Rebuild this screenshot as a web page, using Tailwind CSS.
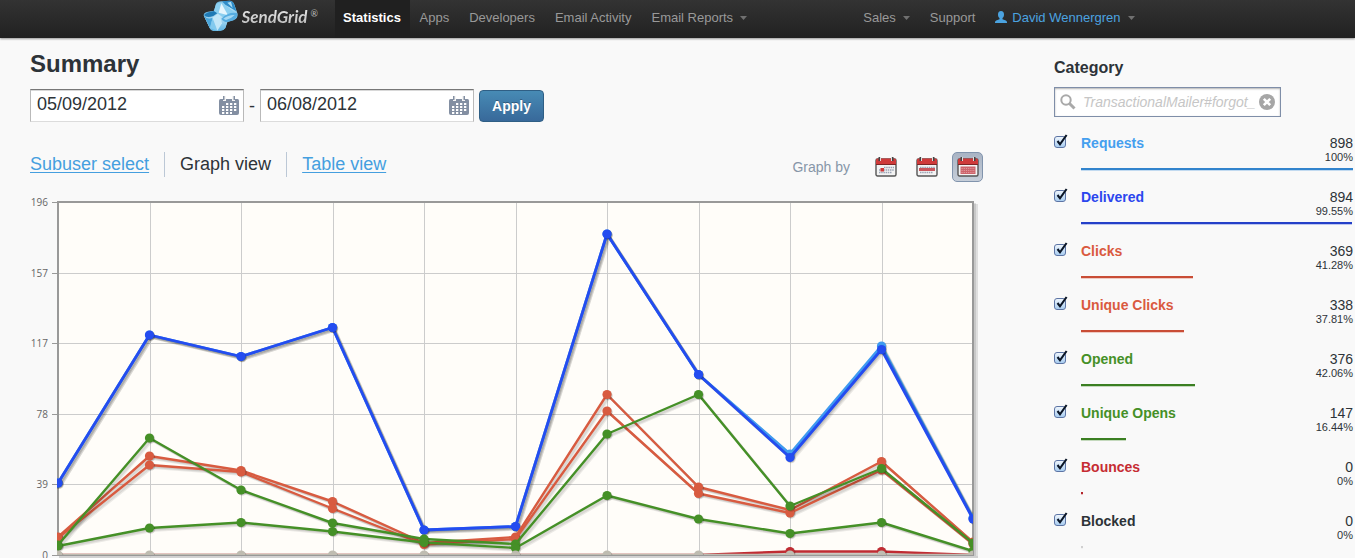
<!DOCTYPE html>
<html lang="en">
<head>
<meta charset="utf-8">
<meta name="viewport" content="width=device-width, initial-scale=1">
<title>SendGrid Statistics</title>
<script src="https://cdn.jsdelivr.net/npm/@tailwindcss/browser@4"></script>
</head>
<body class="h-screen overflow-hidden bg-[#f9f9f9] font-['Liberation_Sans',Arial,sans-serif] text-[#2d3338]">

<svg class="hidden" aria-hidden="true">
  <defs>
    <symbol id="tick" viewBox="0 0 14 15"><path d="M3.5 7 L6 10.3 L12.6 1" fill="none" stroke="#0a1526" stroke-width="2.1"/></symbol>
    <symbol id="date" viewBox="0 0 20 19">
      <path d="M1.500 3 H18.500 Q20 3 20 4.500 V17 Q20 19 18 19 H2 Q0 19 0 17 V4.500 Q0 3 1.500 3Z" fill="#838fa2"/>
      <path d="M4 0H7V5H4Z M13 0H16V5H13Z" fill="#f4f4f4"/>
      <path d="M4 0 H5.500 V4 H4Z M14.500 0 H16 V4 H14.500Z" fill="#838fa2"/>
      <path d="M7 8H18 M3 11H18 M3 14H18 M3 17H13" stroke="#fff" stroke-width="2" stroke-dasharray="2.300 1.700"/>
    </symbol>
    <symbol id="cal" viewBox="0 0 22 20">
      <rect x="1" y="2" width="20" height="17" rx="1.500" fill="#f3f3f3" stroke="#555" stroke-width="1.400"/>
      <path d="M1 3 Q1 1.500 2.500 1.500 H19.500 Q21 1.500 21 3 V7 H1Z" fill="#cf3a3a"/>
      <path d="M1 7.500H21" stroke="#7d2626"/>
      <path d="M4.500 0V4 M17.500 0V4" stroke="#444" stroke-width="2"/>
      <path d="M5.500 0V4 M16.500 0V4" stroke="#ddd" stroke-width="1"/>
    </symbol>
  </defs>
</svg>

<header class="bg-linear-to-b from-[#333] to-[#212121] shadow-[0_1px_2px_rgba(0,0,0,0.4)]">
  <div class="mx-auto flex h-[38px] max-w-[950px] text-[13px] leading-9 text-[#999]">
    <a href="#" aria-label="SendGrid" class="flex w-[132px] shrink-0 items-start gap-[3px]">
      <svg class="h-8 w-9 shrink-0" viewBox="37 0 108 96" aria-hidden="true">
        <defs>
          <linearGradient id="g1" x1="0" y1="0" x2="1" y2="1"><stop offset="0" stop-color="#2d8fc9"/><stop offset=".5" stop-color="#bfe6f8"/><stop offset="1" stop-color="#3a9cd6"/></linearGradient>
          <linearGradient id="g2" x1="0" y1="0" x2="0" y2="1"><stop offset="0" stop-color="#d4eefa"/><stop offset="1" stop-color="#5db4e3"/></linearGradient>
        </defs>
        <path d="M39 46 Q39 37 52 35 L70 32 L76 12 Q80 3 94 4 L118 2 Q128 3 131 14 L141 42 Q142 56 128 61 L110 66 L104 84 Q98 93 86 92 L70 93 Q60 92 57 84Z" fill="url(#g1)"/>
        <path d="M39 46 Q50 60 68 51 L86 40 L110 66 L104 84 Q98 93 86 92 L70 93 Q60 92 57 84Z" fill="url(#g2)"/>
        <path d="M39 46 Q50 60 66 53 L58 84Z" fill="#4aa5da"/>
        <path d="M58 84 L66 53 L80 92Z" fill="#83caee"/>
        <path d="M66 53 L86 40 L94 70 L80 92Z" fill="#c3e7f8"/>
        <path d="M40 45 Q48 36 70 33 L84 37 L68 48 Q48 56 40 45Z" fill="#1f7ab5"/>
        <path d="M76 12 Q90 2 104 14 L131 36 L110 62 L86 44 L70 33Z" fill="#8bcff0"/>
        <path d="M92 10 L112 46 L84 38Z" fill="#e6f6fd"/>
        <path d="M94 4 L118 2 Q128 3 131 14 L137 34 L104 14Z" fill="#2e8cc8"/>
        <path d="M110 8 L121 5 L126 24Z" fill="#a9dcf4"/>
        <path d="M92 56 Q114 34 139 39 Q142 52 128 61 L110 66 Q98 66 92 56Z" fill="#57ade0"/>
        <path d="M98 56 Q114 44 132 45 Q122 56 106 60Z" fill="#a6d9f3"/>
      </svg>
      <span class="-mr-1 bg-linear-to-b from-white to-[#a5a5a5] bg-clip-text pr-1 font-['Lato',sans-serif] text-[17px] leading-[34px] font-bold text-transparent italic">SendGrid</span>
      <span class="font-['Lato',sans-serif] text-[9px] leading-7 text-[#bbb]">®</span>
    </a>
    <nav class="flex grow">
      <a href="#" class="w-[75px] bg-[#202020] text-center font-bold text-white">Statistics</a>
      <a href="#" class="px-2.5">Apps</a>
      <a href="#" class="px-2.5">Developers</a>
      <a href="#" class="px-2.5">Email Activity</a>
      <a href="#" class="flex gap-[7px] px-2.5">Email Reports<svg class="mt-4 h-1 w-[7px]" viewBox="0 0 7 4" aria-hidden="true"><path d="M0 0H7L3.500 4Z" fill="#707070"/></svg></a>
      <a href="#" class="ml-auto flex gap-[7px] px-2.5">Sales<svg class="mt-4 h-1 w-[7px]" viewBox="0 0 7 4" aria-hidden="true"><path d="M0 0H7L3.500 4Z" fill="#707070"/></svg></a>
      <a href="#" class="px-2.5">Support</a>
      <a href="#" class="mr-2 flex px-2.5 text-[#4ba3e0]"><svg class="mt-[11px] mr-[5px] h-3 w-3" viewBox="0 0 12 12" aria-hidden="true"><path d="M6 0C8 0 9 1.400 9 3.400 9 5 8.400 6.300 7.500 7V8.200L10.800 9.400Q12 9.900 12 11.200V12H0V11.200Q0 9.900 1.200 9.400L4.500 8.200V7C3.600 6.300 3 5 3 3.400 3 1.400 4 0 6 0Z" fill="#4ba3e0"/></svg>David Wennergren<svg class="mt-4 ml-[7px] h-1 w-[7px]" viewBox="0 0 7 4" aria-hidden="true"><path d="M0 0H7L3.500 4Z" fill="#707070"/></svg></a>
    </nav>
  </div>
</header>

<main class="flex items-start gap-[71px] pr-0.5 pl-[30px]">
  <section class="min-w-0 flex-1 pt-2.5">
    <h1 class="text-2xl leading-8 font-bold">Summary</h1>

    <form class="mt-[9px] flex items-center text-lg" onsubmit="return false">
      <div class="relative">
        <input aria-label="From date" value="05/09/2012" class="h-[33px] w-[214px] border border-[#b9b9b9] border-t-[#777] border-b-[#dcdcdc] bg-white pb-0.5 pl-1.5 shadow-[inset_0_1px_0_#d8d8d8] outline-none">
        <svg class="pointer-events-none absolute top-[7px] right-[5px] h-[19px] w-5" aria-hidden="true"><use href="#date"/></svg>
      </div>
      <span class="w-4 text-center">-</span>
      <div class="relative">
        <input aria-label="To date" value="06/08/2012" class="h-[33px] w-[214px] border border-[#b9b9b9] border-t-[#777] border-b-[#dcdcdc] bg-white pb-0.5 pl-1.5 shadow-[inset_0_1px_0_#d8d8d8] outline-none">
        <svg class="pointer-events-none absolute top-[7px] right-[5px] h-[19px] w-5" aria-hidden="true"><use href="#date"/></svg>
      </div>
      <button class="ml-[5px] h-8 w-[65px] rounded-sm border border-[#2f5f85] bg-linear-to-b from-[#478bb5] to-[#38699a] text-sm font-bold text-white [text-shadow:0_-1px_0_rgba(0,0,0,0.3)]">Apply</button>
    </form>

    <div class="mt-[30px] flex items-start justify-between">
      <nav class="flex text-lg leading-[25px]">
        <a href="#" class="pr-[15px] text-[#459fdf] underline underline-offset-2">Subuser select</a>
        <span class="border-x border-[#bcc8d6] px-[15px]">Graph view</span>
        <a href="#" class="px-[15px] text-[#459fdf] underline underline-offset-2">Table view</a>
      </nav>
      <div class="flex h-[30px] items-center text-sm text-[#8796a8]">
        <span class="mr-5">Graph by</span>
        <button aria-label="Day" class="mr-2.5 flex h-[30px] w-[31px] items-center justify-center">
          <svg class="h-5 w-[22px]" viewBox="0 0 22 20" aria-hidden="true"><use href="#cal"/><path d="M9 10.500H19M4 13H19M4 15.500H17" stroke="#9aa3b5" stroke-width="1.500" stroke-dasharray="1.500 .7"/><rect x="5.500" y="11" width="3.500" height="3.500" fill="#cf3a3a"/></svg>
        </button>
        <button aria-label="Week" class="mr-2.5 flex h-[30px] w-[31px] items-center justify-center">
          <svg class="h-5 w-[22px]" viewBox="0 0 22 20" aria-hidden="true"><use href="#cal"/><path d="M4 10.500H19M4 15.500H17" stroke="#9aa3b5" stroke-width="1.500" stroke-dasharray="1.500 .7"/><rect x="3" y="11" width="16" height="3" fill="#c9565c"/></svg>
        </button>
        <button aria-label="Month" aria-pressed="true" class="flex h-[30px] w-[31px] items-center justify-center rounded-[5px] border border-[#8194ad] bg-linear-to-b from-[#a9b4c4] to-[#c6ced9]">
          <svg class="h-5 w-[22px]" viewBox="0 0 22 20" aria-hidden="true"><use href="#cal"/><rect x="3.500" y="9.500" width="15" height="7.500" fill="#cd646b"/><path d="M4.500 11.500H18M4.500 13.500H18M4.500 15.500H18" stroke="#e5a5a8" stroke-width=".8" stroke-dasharray="1.200 1"/></svg>
        </button>
      </div>
    </div>

    <svg id="chart" class="mt-[13px] block w-full font-['Open_Sans',sans-serif]" viewBox="30 195 953 365" role="img" aria-label="Email statistics chart">
      <path d="M974 204H978V560H974Z" fill="#000" opacity=".1"/>
      <path d="M974 203H976V560H974Z" fill="#000" opacity=".1"/>
      <rect x="58" y="202" width="915" height="353" fill="#fffdf9"/>
      <path d="M59 556H978V560H59Z" fill="#d2d2d2"/>
      <g id="grid" stroke="#ccc"></g>
      <path d="M58 556V202H973V556" fill="none" stroke="#999" stroke-width="2"/>
      <path d="M57 555H974" stroke="#999" stroke-width="2"/>
      <clipPath id="plot"><rect x="57" y="202" width="916" height="353"/></clipPath>
      <g id="series" clip-path="url(#plot)" fill="none" stroke-linejoin="round"></g>
      <g id="labels" font-size="10" fill="#666" text-anchor="end"></g>
    </svg>
  </section>

  <aside class="w-[299px] shrink-0 pt-[18px]">
    <label for="category" class="block text-base leading-6 font-bold">Category</label>
    <div class="mt-[7px] flex h-[30px] w-[227px] items-center border border-[#7f8ea8] bg-white px-[5px] shadow-[inset_0_1px_2px_rgba(0,0,0,0.3)]">
      <svg class="h-4 w-4 shrink-0" viewBox="0 0 16 16" aria-hidden="true"><circle cx="6" cy="6" r="4.700" fill="none" stroke="#a9a9a9" stroke-width="2"/><path d="M9.500 9.500L14.500 14.500" stroke="#a9a9a9" stroke-width="3"/></svg>
      <input id="category" value="TransactionalMailer#forgot_" class="ml-[7px] min-w-0 flex-1 bg-transparent text-sm text-[#c6c6c6] italic outline-none">
      <button aria-label="Clear category" class="h-4 w-4 shrink-0"><svg class="h-4 w-4" viewBox="0 0 16 16" aria-hidden="true"><circle cx="8" cy="8" r="8" fill="#a6a6a6"/><path d="M4.800 4.800L11.200 11.200M11.200 4.800L4.800 11.200" stroke="#fff" stroke-width="2.600"/></svg></button>
    </div>
    <ul id="metrics" class="mt-[17px]"></ul>
  </aside>
</main>

<template id="metric">
  <li class="mb-[17px] flex">
    <span class="relative w-[27px] shrink-0 pt-0.5">
      <input type="checkbox" checked class="block h-3 w-3 appearance-none rounded-[3px] border border-[#5d75a5] bg-linear-to-b from-[#eef5fc] to-[#a9cdf0]">
      <svg class="pointer-events-none absolute top-0 left-0 h-[15px] w-3.5" aria-hidden="true"><use href="#tick"/></svg>
    </span>
    <div class="flex-1">
      <div class="flex h-[29px] justify-between text-sm leading-[18px]">
        <label class="font-bold"></label>
        <div class="text-right"><div class="count"></div><div class="pct text-[11px] leading-[11px]"></div></div>
      </div>
      <div class="bar mt-[5px] h-[3px] min-w-0.5 border-b border-white/70"></div>
    </div>
  </li>
</template>

<script>
  const metrics = [
    ['Requests', 898, '100%', '#459fef', '#3284cd'],
    ['Delivered', 894, '99.55%', '#2b46ee', '#2440c8'],
    ['Clicks', 369, '41.28%', '#da5a3f', '#c94d36'],
    ['Unique Clicks', 338, '37.81%', '#da5a3f', '#c94d36'],
    ['Opened', 376, '42.06%', '#459027', '#3b7f22'],
    ['Unique Opens', 147, '16.44%', '#459027', '#3b7f22'],
    ['Bounces', 0, '0%', '#c62c33', '#b4262c'],
    ['Blocked', 0, '0%', '#2d3338', '#d0d0d0']
  ];
  const list = document.getElementById('metrics');
  metrics.forEach(([name, count, pct, color, bar], i) => {
    const row = document.getElementById('metric').content.cloneNode(true);
    const label = row.querySelector('label');
    label.textContent = name;
    label.htmlFor = row.querySelector('input').id = 'metric-' + i;
    label.style.color = color;
    row.querySelector('.count').textContent = count;
    row.querySelector('.pct').textContent = pct;
    const b = row.querySelector('.bar');
    b.style.width = pct;
    b.style.backgroundColor = bar;
    list.append(row);
  });

  const draw = (parent, tag, attrs, text) => {
    const el = document.createElementNS('http://www.w3.org/2000/svg', tag);
    for (const k in attrs) el.setAttribute(k, attrs[k]);
    if (text !== undefined) el.textContent = text;
    parent.append(el);
    return el;
  };
  const grid = document.getElementById('grid');
  const labels = document.getElementById('labels');
  [196, 157, 117, 78, 39, 0].forEach((v, i) => {
    const y = [202.5, 273.5, 343.5, 414.5, 484.5, 555.5][i];
    draw(grid, 'path', {d: `M52 ${y}H973`});
    draw(grid, 'path', {d: `M52 ${y}H57`, stroke: '#999'});
    draw(labels, 'text', {x: 48, y: Math.floor(y) + 4}, v);
  });
  const xs = [58, 149.5, 241, 332.5, 424, 515.5, 607, 698.5, 790, 881.5, 973];
  xs.slice(1, -1).forEach(x => draw(grid, 'path', {d: `M${Math.floor(x + .7) + .5} 203V560`}));

  // Vertical position of every point, one list per series, back to front.
  const base = 555;
  const series = [
    ['#3f9bf0', 2.8, [483, 335, 356.5, 327.5, 530, 526.5, 234, 374.5, 454, 346, 518]],
    ['#244cf0', 2.8, [483, 335, 356.5, 327.5, 530, 526.5, 234, 374.5, 457.5, 349.5, 519]],
    ['#d85b40', 2.4, [537, 456, 470.5, 501.5, 543, 537, 394.5, 487, 510, 461.5, 542]],
    ['#d85b40', 2.4, [538, 465, 472, 508.5, 544.5, 539, 411, 493.5, 513, 470, 544]],
    ['#459027', 2.4, [545, 438, 490, 523, 539, 544, 434, 394.5, 506, 468.5, 543]],
    ['#459027', 2.4, [546, 528, 522.5, 531.5, 542.5, 548, 495.5, 519, 533.5, 522.5, 551]],
    ['#c02c33', 2.4, [base, base, base, base, base, base, base, base, 551.5, 551.5, base]],
    ['#bfbcb1', 2.4, [base, base, base, base, base, base, base, base, base, base, base]]
  ];
  const plot = document.getElementById('series');
  series.forEach(([color, width, ys], n) => {
    const points = ys.map((y, i) => `${xs[i]},${y}`).join(' ');
    for (const o of [.9, 1.8, 2.7]) {
      draw(plot, 'polyline', {points, stroke: '#000', 'stroke-opacity': .08, 'stroke-width': width, transform: `translate(${o} ${o})`});
    }
    draw(plot, 'polyline', {points, stroke: color, 'stroke-width': width});
    ys.forEach((y, i) => {
      if (y === base && n < series.length - 1) return;
      for (const o of [.6, 1.2]) draw(plot, 'circle', {cx: xs[i] + o, cy: y + o, r: 4.6, fill: '#000', 'fill-opacity': .12});
      draw(plot, 'circle', {cx: xs[i], cy: y, r: 4.6, fill: color});
    });
  });
</script>
</body>
</html>
